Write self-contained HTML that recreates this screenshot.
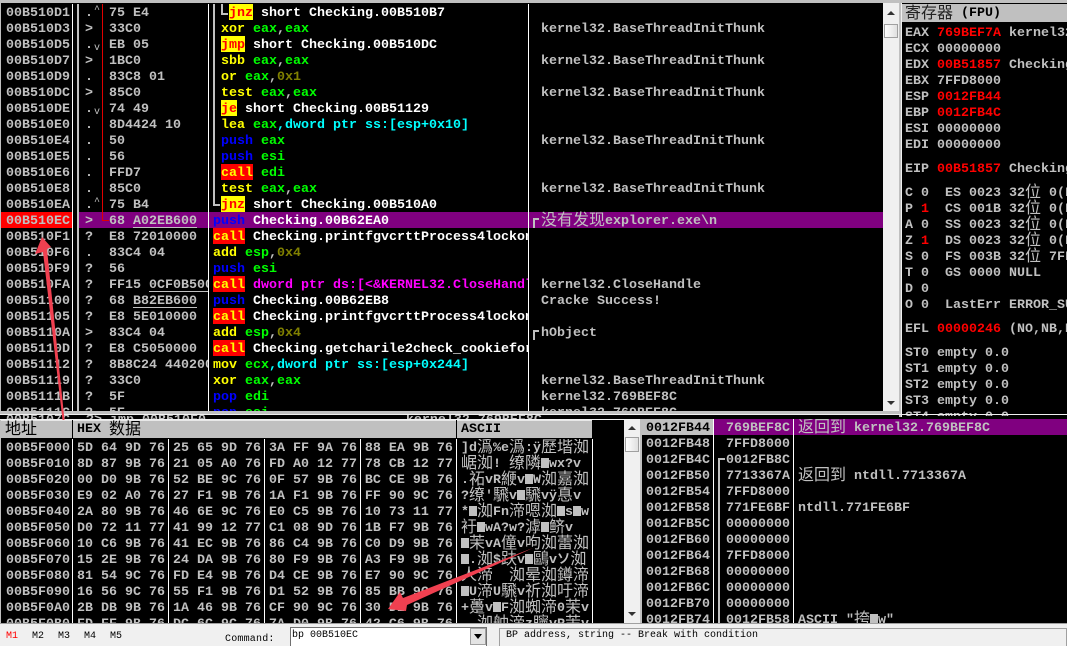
<!DOCTYPE html>
<html><head><meta charset="utf-8"><style>
html,body{margin:0;padding:0;background:#000}
#a{position:relative;width:1067px;height:646px;overflow:hidden;background:#000;font:bold 13.33px/16px "Liberation Mono",monospace;color:#c0c0c0}
.k{position:absolute;overflow:hidden}
.t{position:absolute}
p{margin:0;height:16px;line-height:20px;white-space:pre}
em{font:normal 16px/0 "WenQuanYi Zen Hei","Noto Sans CJK SC",sans-serif;position:relative;top:1px}
.h em,.rh em{top:2px}
i{display:inline-block;width:8px;height:10px;background:#c0c0c0;font-style:normal;vertical-align:-1px}
.y{color:#ff0}.g{color:#0f0}.o{color:#808000}.c{color:#0ff}.w{color:#fff}.b{color:#00f}.m{color:#f0f}.r{color:#f00}
.J{display:inline-block;height:16px;background:#ff0;color:#f00;vertical-align:top}
.C{display:inline-block;height:16px;background:#f00;color:#ff0;vertical-align:top}
u{text-decoration:none;border-bottom:1px solid #c0c0c0;display:inline-block;height:15px;vertical-align:top}
.q{font:normal 10px/0 "Liberation Mono",monospace;position:relative;top:-4px;margin-left:1px}
.v{top:2px}
.h{position:absolute;background:#c0c0c0;color:#000;top:420px;height:18px;line-height:18px;border-top:1px solid #e8e8e8;box-sizing:border-box;white-space:pre}
.st{font:normal 10px/12px "Liberation Mono",monospace;color:#000;position:absolute}
.sb{position:absolute;background:#f0f0f0}
.th{position:absolute;background:linear-gradient(90deg,#fff,#e0e0e0);border:1px solid #a0a0a0;box-sizing:border-box}
.up,.dn{position:absolute;width:0;height:0;border-left:4px solid transparent;border-right:4px solid transparent}
.up{border-bottom:4px solid #333}.dn{border-top:4px solid #333}
</style></head><body><div id="a">

<div class="k" style="left:0;top:0;width:1067px;height:3px;background:#c0c0c0"></div>

<!-- highlight row -->
<div class="k" style="left:1px;top:212px;width:71px;height:16px;background:#f00"></div>
<div class="k" style="left:79px;top:212px;width:804px;height:16px;background:#800080"></div>

<!-- addresses -->
<div class="k" style="left:6px;top:4px;width:66px;height:407px">
<p>00B510D1</p><p>00B510D3</p><p>00B510D5</p><p>00B510D7</p><p>00B510D9</p><p>00B510DC</p><p>00B510DE</p><p>00B510E0</p><p>00B510E4</p><p>00B510E5</p><p>00B510E6</p><p>00B510E8</p><p>00B510EA</p><p>00B510EC</p><p>00B510F1</p><p>00B510F6</p><p>00B510F9</p><p>00B510FA</p><p>00B51100</p><p>00B51105</p><p>00B5110A</p><p>00B5110D</p><p>00B51112</p><p>00B51119</p><p>00B5111B</p><p>00B5111C</p>
</div>

<!-- marks -->
<div class="k" style="left:85px;top:4px;width:17px;height:407px">
<p>.<span class="q">^</span></p><p>&gt;</p><p>.<span class="q v">v</span></p><p>&gt;</p><p>.</p><p>&gt;</p><p>.<span class="q v">v</span></p><p>.</p><p>.</p><p>.</p><p>.</p><p>.</p><p>.<span class="q">^</span></p><p>&gt;</p><p>?</p><p>.</p><p>?</p><p>?</p><p>?</p><p>?</p><p>&gt;</p><p>?</p><p>?</p><p>?</p><p>?</p><p>?</p>
</div>

<!-- hex bytes -->
<div class="k" style="left:109px;top:4px;width:99px;height:407px">
<p>75 E4</p><p>33C0</p><p>EB 05</p><p>1BC0</p><p>83C8 01</p><p>85C0</p><p>74 49</p><p>8D4424 10</p><p>50</p><p>56</p><p>FFD7</p><p>85C0</p><p>75 B4</p><p>68 <u>A02EB600</u></p><p>E8 72010000</p><p>83C4 04</p><p>56</p><p>FF15 <u>0CF0B500</u></p><p>68 <u>B82EB600</u></p><p>E8 5E010000</p><p>83C4 04</p><p>E8 C5050000</p><p>8B8C24 44020000</p><p>33C0</p><p>5F</p><p>5E</p>
</div>

<!-- disasm top -->
<div class="k" style="left:221px;top:4px;width:307px;height:208px">
<p style="padding-left:8px"><span class="J">jnz</span><span class="w"> short Checking.00B510B7</span></p>
<p><span class="y">xor</span> <span class="g">eax</span>,<span class="g">eax</span></p>
<p><span class="J">jmp</span><span class="w"> short Checking.00B510DC</span></p>
<p><span class="y">sbb</span> <span class="g">eax</span>,<span class="g">eax</span></p>
<p><span class="y">or</span> <span class="g">eax</span>,<span class="o">0x1</span></p>
<p><span class="y">test</span> <span class="g">eax</span>,<span class="g">eax</span></p>
<p><span class="J">je</span><span class="w"> short Checking.00B51129</span></p>
<p><span class="y">lea</span> <span class="g">eax</span><span class="c">,dword ptr ss:[esp+0x10]</span></p>
<p><span class="b">push</span> <span class="g">eax</span></p>
<p><span class="b">push</span> <span class="g">esi</span></p>
<p><span class="C">call</span> <span class="g">edi</span></p>
<p><span class="y">test</span> <span class="g">eax</span>,<span class="g">eax</span></p>
<p><span class="J">jnz</span><span class="w"> short Checking.00B510A0</span></p>
</div>
<div class="k" style="left:213px;top:212px;width:315px;height:199px">
<p><span class="b">push</span> <span class="w">Checking.00B62EA0</span></p>
<p><span class="C">call</span> <span class="w">Checking.printfgvcrttProcess4lockon</span></p>
<p><span class="y">add</span> <span class="g">esp</span>,<span class="o">0x4</span></p>
<p><span class="b">push</span> <span class="g">esi</span></p>
<p><span class="C">call</span> <span class="m">dword ptr ds:[&lt;&amp;KERNEL32.CloseHandle&gt;]</span></p>
<p><span class="b">push</span> <span class="w">Checking.00B62EB8</span></p>
<p><span class="C">call</span> <span class="w">Checking.printfgvcrttProcess4lockon</span></p>
<p><span class="y">add</span> <span class="g">esp</span>,<span class="o">0x4</span></p>
<p><span class="C">call</span> <span class="w">Checking.getcharile2check_cookiefor</span></p>
<p><span class="y">mov</span> <span class="g">ecx</span><span class="c">,dword ptr ss:[esp+0x244]</span></p>
<p><span class="y">xor</span> <span class="g">eax</span>,<span class="g">eax</span></p>
<p><span class="b">pop</span> <span class="g">edi</span></p>
<p><span class="b">pop</span> <span class="g">esi</span></p>
</div>

<!-- comments -->
<div class="k" style="left:541px;top:4px;width:342px;height:407px">
<p> </p><p>kernel32.BaseThreadInitThunk</p><p> </p><p>kernel32.BaseThreadInitThunk</p><p> </p><p>kernel32.BaseThreadInitThunk</p><p> </p><p> </p><p>kernel32.BaseThreadInitThunk</p><p> </p><p> </p><p>kernel32.BaseThreadInitThunk</p><p> </p><p><em>没有发现</em>explorer.exe\n</p><p> </p><p> </p><p> </p><p>kernel32.CloseHandle</p><p>Cracke Success!</p><p> </p><p>hObject</p><p> </p><p> </p><p>kernel32.BaseThreadInitThunk</p><p>kernel32.769BEF8C</p><p>kernel32.769BEF8C</p>
</div>
<!-- comment brackets -->
<div class="k" style="left:533px;top:218px;width:2px;height:10px;background:#c0c0c0"></div>
<div class="k" style="left:533px;top:218px;width:6px;height:2px;background:#c0c0c0"></div>
<div class="k" style="left:533px;top:330px;width:2px;height:10px;background:#c0c0c0"></div>
<div class="k" style="left:533px;top:330px;width:6px;height:2px;background:#c0c0c0"></div>

<!-- column separators -->
<div class="k" style="left:72px;top:4px;width:1px;height:407px;background:#fff"></div>
<div class="k" style="left:77px;top:4px;width:2px;height:407px;background:#c0c0c0"></div>
<div class="k" style="left:102px;top:4px;width:1px;height:216px;background:#e00000"></div>
<div class="k" style="left:102px;top:220px;width:7px;height:1px;background:#e00000"></div>
<div class="k" style="left:208px;top:4px;width:1px;height:407px;background:#fff"></div>
<div class="k" style="left:528px;top:4px;width:1px;height:407px;background:#fff"></div>
<div class="k" style="left:0;top:3px;width:1px;height:408px;background:#c0c0c0"></div>
<!-- jump lines -->
<div class="k" style="left:221px;top:4px;width:2px;height:11px;background:#c0c0c0"></div>
<div class="k" style="left:221px;top:13px;width:7px;height:2px;background:#c0c0c0"></div>
<div class="k" style="left:213px;top:4px;width:2px;height:202px;background:#c0c0c0"></div>
<div class="k" style="left:213px;top:204px;width:7px;height:2px;background:#c0c0c0"></div>

<!-- upper scrollbar -->
<div class="sb" style="left:883px;top:3px;width:16px;height:408px"></div>
<div class="up" style="left:887px;top:11px"></div>
<div class="th" style="left:884px;top:24px;width:14px;height:14px"></div>
<div class="dn" style="left:887px;top:401px"></div>
<div class="k" style="left:899px;top:3px;width:2px;height:414px;background:#c0c0c0"></div>
<div class="k" style="left:901px;top:3px;width:1px;height:414px;background:#f0f0f0"></div>

<!-- registers -->
<div class="k rh" style="left:902px;top:4px;width:165px;height:18px;background:#c0c0c0;color:#000;line-height:20px;white-space:pre;padding-left:3px;box-sizing:border-box"><em style="color:#222">寄存器</em> (FPU)</div>
<div class="k" style="left:905px;top:24px;width:162px;height:392px">
<p>EAX <span class="r">769BEF7A</span> kernel32.BaseThreadInitThunk</p>
<p>ECX 00000000</p>
<p>EDX <span class="r">00B51857</span> Checking.&lt;ModuleEntryPoint&gt;</p>
<p>EBX 7FFD8000</p>
<p>ESP <span class="r">0012FB44</span></p>
<p>EBP <span class="r">0012FB4C</span></p>
<p>ESI 00000000</p>
<p>EDI 00000000</p>
<p style="height:8px"> </p>
<p>EIP <span class="r">00B51857</span> Checking.&lt;ModuleEntryPoint&gt;</p>
<p style="height:8px"> </p>
<p>C 0  ES 0023 32<em>位</em> 0(FFFFFFFF)</p>
<p>P <span class="r">1</span>  CS 001B 32<em>位</em> 0(FFFFFFFF)</p>
<p>A 0  SS 0023 32<em>位</em> 0(FFFFFFFF)</p>
<p>Z <span class="r">1</span>  DS 0023 32<em>位</em> 0(FFFFFFFF)</p>
<p>S 0  FS 003B 32<em>位</em> 7FFDF000</p>
<p>T 0  GS 0000 NULL</p>
<p>D 0</p>
<p>O 0  LastErr ERROR_SUCCESS</p>
<p style="height:8px"> </p>
<p>EFL <span class="r">00000246</span> (NO,NB,E,BE)</p>
<p style="height:8px"> </p>
<p>ST0 empty 0.0</p>
<p>ST1 empty 0.0</p>
<p>ST2 empty 0.0</p>
<p>ST3 empty 0.0</p>
<p>ST4 empty 0.0</p>
</div>

<!-- horizontal splitter -->
<div class="k" style="left:0;top:411px;width:899px;height:3px;background:#c0c0c0"></div>
<div class="k" style="left:0;top:414px;width:1067px;height:1px;background:#f0f0f0"></div>
<div class="k" style="left:0;top:415px;width:899px;height:4px;overflow:hidden;background:#000"><div class="t" style="left:6px;top:-2px;white-space:pre">00B5107C  ?&gt; jmp 00B510F0                         kernel32.769BEF8C</div></div>
<div class="k" style="left:0;top:419px;width:1067px;height:1px;background:#f0f0f0"></div>

<!-- dump headers -->
<div class="h" style="left:1px;width:71px;padding-left:4px"><em>地址</em></div>
<div class="h" style="left:73px;width:383px;padding-left:4px">HEX <em>数据</em></div>
<div class="h" style="left:457px;width:135px;padding-left:4px">ASCII</div>

<!-- dump rows -->
<div class="k" style="left:0;top:420px;width:624px;height:203px;clip-path:inset(19px 0 0 0)">
<div class="t" style="left:6px;top:19px">
<p>00B5F000</p><p>00B5F010</p><p>00B5F020</p><p>00B5F030</p><p>00B5F040</p><p>00B5F050</p><p>00B5F060</p><p>00B5F070</p><p>00B5F080</p><p>00B5F090</p><p>00B5F0A0</p><p>00B5F0B0</p>
</div>
<div class="t" style="left:77px;top:19px">
<p>5D 64 9D 76 25 65 9D 76 3A FF 9A 76 88 EA 9B 76</p>
<p>8D 87 9B 76 21 05 A0 76 FD A0 12 77 78 CB 12 77</p>
<p>00 D0 9B 76 52 BE 9C 76 0F 57 9B 76 BC CE 9B 76</p>
<p>E9 02 A0 76 27 F1 9B 76 1A F1 9B 76 FF 90 9C 76</p>
<p>2A 80 9B 76 46 6E 9C 76 E0 C5 9B 76 10 73 11 77</p>
<p>D0 72 11 77 41 99 12 77 C1 08 9D 76 1B F7 9B 76</p>
<p>10 C6 9B 76 41 EC 9B 76 86 C4 9B 76 C0 D9 9B 76</p>
<p>15 2E 9B 76 24 DA 9B 76 80 F9 9B 76 A3 F9 9B 76</p>
<p>81 54 9C 76 FD E4 9B 76 D4 CE 9B 76 E7 90 9C 76</p>
<p>16 56 9C 76 55 F1 9B 76 D1 52 9B 76 85 BB 9C 76</p>
<p>2B DB 9B 76 1A 46 9B 76 CF 90 9C 76 30 D1 9B 76</p>
<p>FD FF 9B 76 DC 6C 9C 76 7A D0 9B 76 42 C6 9B 76</p>
</div>
<div class="t" style="left:461px;top:19px;width:131px;height:184px;overflow:hidden">
<p>]d<em>潙</em>%e<em>潙</em>:ÿ<em>歷堦洳</em></p>
<p><em>崌洳</em>! <em>缭隣</em><i></i>wx?v</p>
<p>.<em>祏</em>vR<em>緶</em>v<i></i>W<em>洳嘉洳</em></p>
<p>?<em>缭</em>'<em>騛</em>v<i></i><em>騛</em>vÿ<em>惪</em>v</p>
<p>*<i></i><em>洳</em>Fn<em>渧嗯洳</em><i></i>s<i></i>w</p>
<p><em>衧</em><i></i>wA?w?<em>滹</em><i></i><em>鲚</em>v</p>
<p><i></i><em>茉</em>vA<em>僮</em>v<em>呴洳蕾洳</em></p>
<p><i></i>.<em>洳</em>$<em>趺</em>v<i></i><em>鷗</em>vソ<em>洳</em></p>
<p><em>人渧</em>  <em>洳晕洳鐏渧</em></p>
<p><i></i>U<em>渧</em>U<em>騛</em>v<em>祈洳吁渧</em></p>
<p>+<em>躉</em>v<i></i>F<em>洳蜘渧</em>0<em>茉</em>v</p>
<p>  <em>洳舯渧</em>z<em>矃</em>vR<em>茉</em>v</p>
</div>
</div>
<!-- dump separators -->
<div class="k" style="left:72px;top:420px;width:1px;height:19px;background:#000"></div>
<div class="k" style="left:72px;top:439px;width:1px;height:184px;background:#fff"></div>
<div class="k" style="left:168px;top:439px;width:1px;height:184px;background:#fff"></div>
<div class="k" style="left:264px;top:439px;width:1px;height:184px;background:#fff"></div>
<div class="k" style="left:360px;top:439px;width:1px;height:184px;background:#fff"></div>
<div class="k" style="left:456px;top:439px;width:1px;height:184px;background:#fff"></div>
<div class="k" style="left:592px;top:439px;width:1px;height:184px;background:#fff"></div>
<div class="k" style="left:0;top:420px;width:1px;height:203px;background:#c0c0c0"></div>

<!-- dump scrollbar -->
<div class="sb" style="left:624px;top:420px;width:16px;height:203px"></div>
<div class="up" style="left:628px;top:426px"></div>
<div class="th" style="left:625px;top:437px;width:14px;height:15px"></div>
<div class="dn" style="left:628px;top:612px"></div>

<!-- stack -->
<div class="k" style="left:640px;top:420px;width:2px;height:203px;background:#c0c0c0"></div>
<div class="k" style="left:640px;top:419px;width:73px;height:16px;background:#c0c0c0"></div>
<div class="k" style="left:714px;top:419px;width:353px;height:16px;background:#800080"></div>
<div class="k" style="left:646px;top:419px;width:68px;height:204px">
<p style="color:#000">0012FB44</p><p>0012FB48</p><p>0012FB4C</p><p>0012FB50</p><p>0012FB54</p><p>0012FB58</p><p>0012FB5C</p><p>0012FB60</p><p>0012FB64</p><p>0012FB68</p><p>0012FB6C</p><p>0012FB70</p><p>0012FB74</p>
</div>
<div class="k" style="left:726px;top:419px;width:66px;height:204px">
<p>769BEF8C</p><p>7FFD8000</p><p>0012FB8C</p><p>7713367A</p><p>7FFD8000</p><p>771FE6BF</p><p>00000000</p><p>00000000</p><p>7FFD8000</p><p>00000000</p><p>00000000</p><p>00000000</p><p>0012FB58</p>
</div>
<div class="k" style="left:798px;top:419px;width:269px;height:204px">
<p><em>返回到</em> kernel32.769BEF8C</p><p> </p><p> </p><p><em>返回到</em> ntdll.7713367A</p><p> </p><p>ntdll.771FE6BF</p><p> </p><p> </p><p> </p><p> </p><p> </p><p> </p><p>ASCII "<em>挎</em><i></i>w"</p>
</div>
<div class="k" style="left:713px;top:419px;width:1px;height:204px;background:#fff"></div>
<div class="k" style="left:793px;top:419px;width:1px;height:204px;background:#fff"></div>
<div class="k" style="left:718px;top:458px;width:2px;height:165px;background:#c0c0c0"></div>
<div class="k" style="left:718px;top:458px;width:7px;height:2px;background:#c0c0c0"></div>

<!-- status bar -->
<div class="k" style="left:0;top:623px;width:1067px;height:23px;background:#f0f0f0;border-top:1px solid #a0a0a0;box-sizing:border-box"></div>
<div class="st" style="left:6px;top:631px;color:#f00">M1</div>
<div class="st" style="left:32px;top:631px">M2</div>
<div class="st" style="left:58px;top:631px">M3</div>
<div class="st" style="left:84px;top:631px">M4</div>
<div class="st" style="left:110px;top:631px">M5</div>
<div class="st" style="left:225px;top:634px;letter-spacing:.2px">Command:</div>
<div class="k" style="left:290px;top:627px;width:197px;height:19px;background:#fff;border:1px solid #707070;border-bottom:0;box-sizing:border-box"></div>
<div class="st" style="left:292px;top:630px">bp 00B510EC</div>
<div class="k" style="left:470px;top:628px;width:16px;height:17px;background:#e4e4e4;border:1px solid #a0a0a0;box-sizing:border-box"></div>
<div class="dn" style="left:474px;top:634px;border-top:5px solid #000"></div>
<div class="k" style="left:499px;top:628px;width:568px;height:18px;border:1px solid #a0a0a0;border-bottom:0;box-sizing:border-box"></div>
<div class="st" style="left:506px;top:630px">BP address, string -- Break with condition</div>

<!-- red annotation arrows -->
<svg class="t" style="left:0;top:0" width="1067" height="646" viewBox="0 0 1067 646">
<polygon points="42,237 51,247 47,249 64.5,420 62.5,420 43,252 35,254" fill="#f04050"/>
<polygon points="388,609 400,592 403,598 533,548 407,605 406,611" fill="#f04050"/>
</svg>
</div></body></html>
